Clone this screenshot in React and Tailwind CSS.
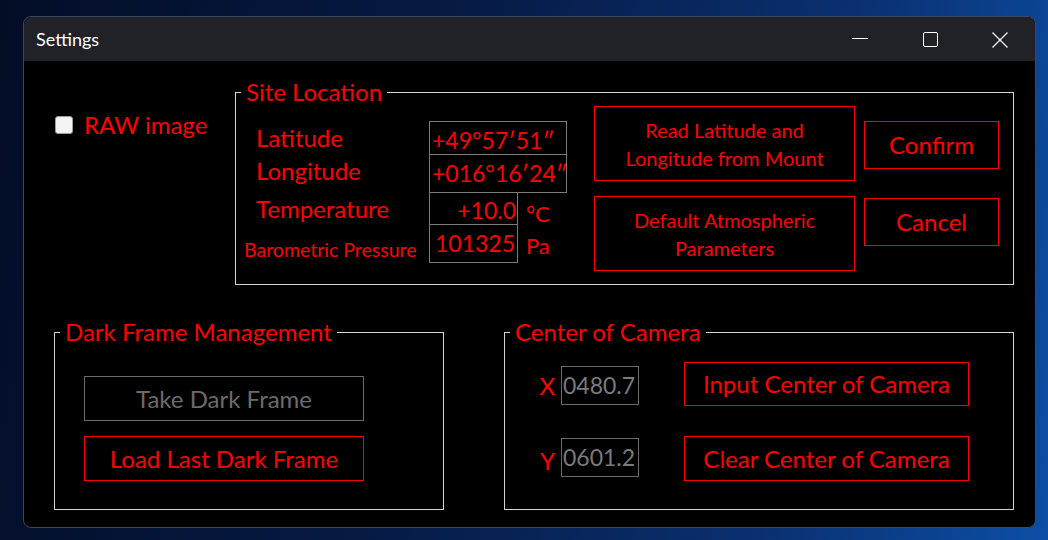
import React from "react";

function GroupBox({ title, className, children }) {
  return (
    <fieldset className={`border border-[#d4d4d4] ${className}`}>
      <legend className="ml-[5px] px-[5px] text-[24px] leading-[28px] text-[#ff0000]">
        {title}
      </legend>
      {children}
    </fieldset>
  );
}

function RedButton({ className, children }) {
  return (
    <button className={`flex items-center justify-center border border-[#ff0000] text-[#ff0000] ${className}`}>
      {children}
    </button>
  );
}

function CaptionButtons() {
  return (
    <div className="flex h-full">
      <div className="flex w-[70px] items-center justify-center">
        <svg width="16" height="16" viewBox="0 0 16 16">
          <path d="M0 7.5h16" stroke="#fff" strokeWidth="1" />
        </svg>
      </div>
      <div className="flex w-[70px] items-center justify-center">
        <svg width="15" height="15" viewBox="0 0 15 15">
          <rect x="0.5" y="0.5" width="14" height="14" rx="1.5" fill="none" stroke="#fff" strokeWidth="1" />
        </svg>
      </div>
      <div className="flex w-[70px] items-center justify-center pt-px">
        <svg width="16" height="16" viewBox="0 0 16 16">
          <path d="M0.5 0.5l15 15M15.5 0.5l-15 15" stroke="#fff" strokeWidth="1.1" />
        </svg>
      </div>
    </div>
  );
}

export default function App() {
  return (
    <div className="h-[540px] w-[1048px] overflow-hidden bg-[linear-gradient(100deg,#030d26_0%,#061a44_40%,#0a3070_75%,#0c4fa6_100%)] pl-[23px] pt-[16px] font-[family-name:Lato,'Noto_Sans',sans-serif]">
      <div className="flex h-[512px] w-[1013px] flex-col overflow-hidden rounded-[8px] border border-[#3b4864] bg-black">
        {/* title bar */}
        <div className="flex h-[44px] shrink-0 items-center justify-between bg-[#202228]">
          <span className="pl-[12px] text-[18px] text-white">Settings</span>
          <CaptionButtons />
        </div>

        {/* body */}
        <div className="flex-1">
          <div className="flex items-start">
            <div className="w-[211px]">
              <label className="ml-[31px] mt-[49px] flex items-center gap-[11px]">
                <span className="h-[18px] w-[18px] shrink-0 rounded-[3px] border border-[#9c9c9c] bg-[#f4f4f4]" />
                <span className="text-[24px] leading-[30px] text-[#ff0000]">RAW image</span>
              </label>
            </div>

            <GroupBox title="Site Location" className="mt-[17px] h-[207px] w-[779px]">
              <div className="flex">
                <div className="flex w-[358px] flex-col pt-[15px] text-[#ff0000]">
                  <div className="flex h-[34px]">
                    <div className="flex w-[193px] items-center pl-[20px] text-[24px]">Latitude</div>
                    <div className="flex w-[138px] items-center border border-[#7a7a7a] pl-[2px] pt-[4px] text-[23px] leading-none">
                      +49°57′51″
                    </div>
                  </div>
                  <div className="-mt-px flex h-[39px]">
                    <div className="flex w-[193px] items-center pb-[6px] pl-[20px] text-[24px]">Longitude</div>
                    <div className="flex w-[138px] items-center border border-[#7a7a7a] pl-[2px] text-[23px] leading-none">
                      +016°16′24″
                    </div>
                  </div>
                  <div className="-mt-px flex h-[33px]">
                    <div className="flex w-[193px] items-center pl-[20px] text-[24px]">Temperature</div>
                    <div className="flex w-[89px] items-center justify-end border border-[#7a7a7a] pr-[1px] pt-[4px] text-[23px] leading-none">
                      +10.0
                    </div>
                    <div className="ml-[8px] flex items-center pt-[10px] text-[22px] leading-none">°C</div>
                  </div>
                  <div className="-mt-px flex h-[39px]">
                    <div className="flex w-[193px] items-center pl-[8px] pt-[12px] text-[19.5px]">Barometric Pressure</div>
                    <div className="flex w-[89px] items-center justify-end border border-[#7a7a7a] pr-[2px] text-[23px] leading-none">
                      101325
                    </div>
                    <div className="ml-[8px] flex items-center pt-[4px] text-[22px] leading-none">Pa</div>
                  </div>
                </div>

                <div className="flex w-[261px] flex-col gap-[15px]">
                  <RedButton className="h-[75px] w-[261px] text-[20px] leading-[28px]">
                    <span>
                      Read Latitude and
                      <br />
                      Longitude from Mount
                    </span>
                  </RedButton>
                  <RedButton className="h-[75px] w-[261px] text-[20px] leading-[28px]">
                    <span>
                      Default Atmospheric
                      <br />
                      Parameters
                    </span>
                  </RedButton>
                </div>

                <div className="ml-[9px] flex w-[135px] flex-col gap-[29px] pt-[15px]">
                  <RedButton className="h-[48px] w-[135px] text-[24px]">Confirm</RedButton>
                  <RedButton className="h-[48px] w-[135px] text-[24px]">Cancel</RedButton>
                </div>
              </div>
            </GroupBox>
          </div>

          <div className="mt-[33px] flex items-start">
            <GroupBox title="Dark Frame Management" className="ml-[30px] h-[192px] w-[390px]">
              <div className="ml-[29px] mt-[30px] flex flex-col gap-[15px]">
                <button className="flex h-[45px] w-[280px] items-center justify-center border border-[#6b6b6b] text-[24px] text-[#6b6b6b]">
                  Take Dark Frame
                </button>
                <RedButton className="h-[45px] w-[280px] text-[24px]">Load Last Dark Frame</RedButton>
              </div>
            </GroupBox>

            <GroupBox title="Center of Camera" className="ml-[60px] h-[192px] w-[510px]">
              <div className="mt-[16px] flex h-[44px] items-start">
                <div className="mt-[4px] flex h-[39px] w-[56px] items-center justify-end pr-[6px] pt-[1px] text-[24px] text-[#ff0000]">
                  X
                </div>
                <div className="mt-[4px] flex h-[39px] w-[78px] items-center overflow-hidden border border-[#6b6b6b] pl-[1px] text-[23px] leading-none text-[#7a7a7a]">
                  0480.7
                </div>
                <RedButton className="ml-[45px] h-[44px] w-[285px] text-[24px]">Input Center of Camera</RedButton>
              </div>
              <div className="mt-[30px] flex h-[45px] items-start">
                <div className="mt-[2px] flex h-[39px] w-[56px] items-center justify-end pr-[6px] pt-[6px] text-[24px] text-[#ff0000]">
                  Y
                </div>
                <div className="mt-[2px] flex h-[39px] w-[78px] items-center overflow-hidden border border-[#6b6b6b] pl-[1px] text-[23px] leading-none text-[#7a7a7a]">
                  0601.2
                </div>
                <RedButton className="ml-[45px] h-[45px] w-[285px] text-[24px]">Clear Center of Camera</RedButton>
              </div>
            </GroupBox>
          </div>
        </div>
      </div>
    </div>
  );
}
